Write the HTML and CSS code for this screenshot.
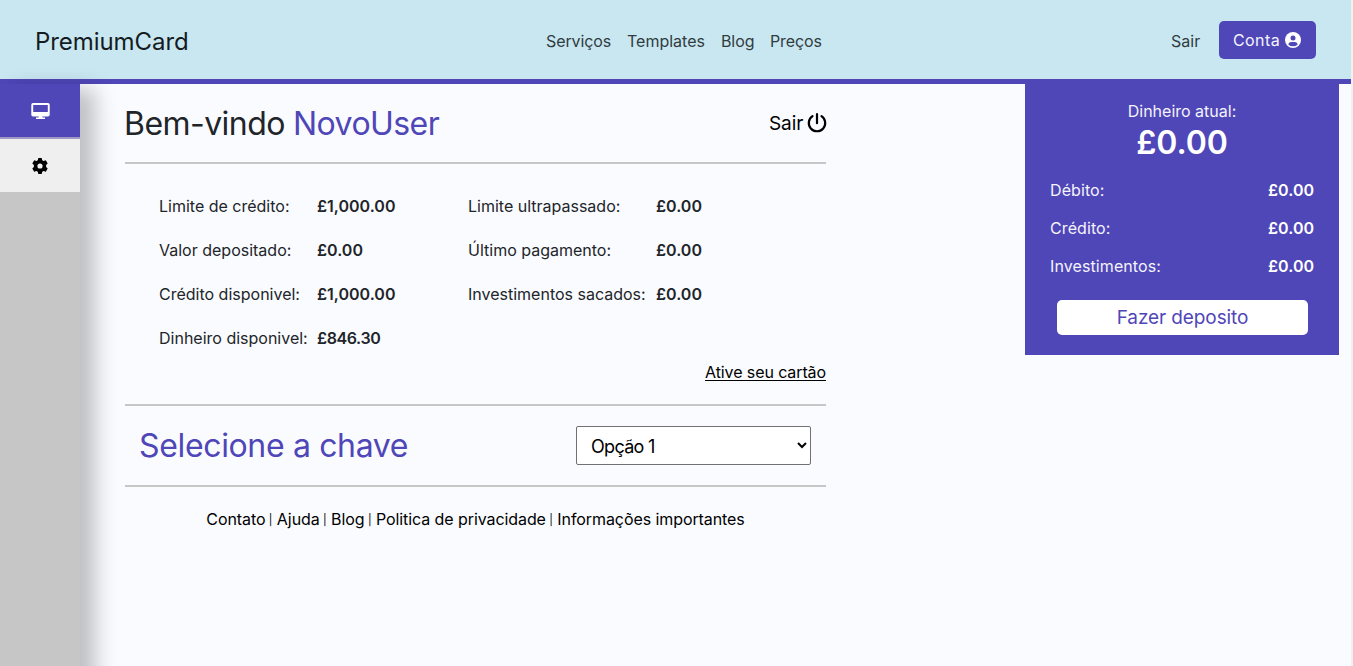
FILE: index.html
```html
<!DOCTYPE html>
<html lang="pt">
<head>
<meta charset="utf-8">
<title>PremiumCard</title>
<link rel="stylesheet" href="styles.css">
</head>
<body>
<div class="page">
  <header class="header">
    <a class="brand">PremiumCard</a>
    <nav class="nav"><a class="n1">Serviços</a><a class="n2">Templates</a><a class="n3">Blog</a><a class="n4">Preços</a></nav>
    <div class="account">
      <a class="logout">Sair</a>
      <a class="account-btn"><span class="t-conta">Conta</span>
        <svg width="16" height="16" viewBox="0 0 16 16"><circle cx="8" cy="8" r="8" fill="#fff"/><circle cx="8" cy="6.1" r="2.5" fill="#4f46b8"/><path d="M3.3 12.4C3.8 10.9 5 10.1 6.3 10.1h3.4c1.3 0 2.5.8 3 2.3A6.4 6.4 0 0 1 8 14.300a6.400 6.400 0 0 1-4.700-1.900z" fill="#4f46b8"/></svg>
      </a>
    </div>
  </header>
  <div class="body">
    <aside class="sidebar">
      <a class="side-item active"><svg width="19" height="17" viewBox="0 0 19 17" fill="#fff"><path fill-rule="evenodd" d="M2 0h15a1.700 1.700 0 0 1 1.700 1.700v10a1.700 1.700 0 0 1-1.700 1.700H2A1.700 1.700 0 0 1 .3 11.700v-10A1.700 1.700 0 0 1 2 0zm.2 2v7h14.600V2z"/><path d="M7.800 13h3.400l.4 1.400h2.400v1.600H5v-1.600h2.400z"/></svg></a>
      <a class="side-item"><svg width="16" height="16" viewBox="0 0 16 16"><path fill-rule="evenodd" d="M6.300 0h3.400l.5 2.200 1.400.8 2.200-.7 1.900 3.200-1.600 1.500v2l1.600 1.500-1.900 3.200-2.200-.7-1.400.8L9.700 16H6.300l-.5-2.200-1.400-.8-2.200.7-1.900-3.200L1.900 9V7L.3 5.500l1.900-3.200 2.200.7 1.400-.8zM8 5.400a2.600 2.600 0 1 0 0 5.200 2.600 2.600 0 0 0 0-5.200z"/></svg></a>
    </aside>
    <main class="main">
      <section class="welcome">
        <h1 class="title"><span class="t-bem">Bem-vindo</span><span class="t-user">NovoUser</span></h1>
        <a class="power"><span class="t-sair">Sair</span>
          <svg width="20" height="20" viewBox="0 0 20 20" fill="none" stroke="#000" stroke-width="2.200" stroke-linecap="round"><path d="M10 1.200v9M5.500 3.200a8.200 8.200 0 1 0 9 0"/></svg></a>
      </section>
      <section class="summary">
        <dl class="limits">
          <dt>Limite de crédito:</dt><dd>£1,000.00</dd><dt>Limite ultrapassado:</dt><dd>£0.00</dd>
          <dt>Valor depositado:</dt><dd>£0.00</dd><dt>Último pagamento:</dt><dd>£0.00</dd>
          <dt>Crédito disponivel:</dt><dd>£1,000.00</dd><dt>Investimentos sacados:</dt><dd>£0.00</dd>
          <dt>Dinheiro disponivel:</dt><dd class="available">£846.30</dd>
        </dl>
        <a class="activate">Ative seu cartão</a>
      </section>
      <section class="keys">
        <h2 class="key-title">Selecione a chave</h2>
        <select class="key-select"><option>Opção 1</option></select>
      </section>
      <footer class="footer">Contato <i>|</i> Ajuda <i>|</i> Blog <i>|</i> Politica de privacidade <i>|</i> Informações importantes</footer>
    </main>
    <section class="wallet">
      <p class="w-label">Dinheiro atual:</p>
      <p class="w-total">£0.00</p>
      <div class="w-row"><span>Débito:</span><b>£0.00</b></div>
      <div class="w-row"><span>Crédito:</span><b>£0.00</b></div>
      <div class="w-row"><span>Investimentos:</span><b>£0.00</b></div>
      <a class="deposit">Fazer deposito</a>
    </section>
  </div>
</div>
</body>
</html>
```
FILE: styles.css
```css
* { box-sizing: border-box; }
body { margin: 0; background: #f0f0f0; overflow: hidden; font: 16px/24px Inter, "Liberation Sans", sans-serif; color: #212529; letter-spacing: 0; }
h1, h2, p, dl, dd { margin: 0; font-weight: 400; }
a, span, dt, dd, b, h2 { white-space: nowrap; }
svg { display: block; flex: none; }
.page { width: 1351px; height: 666px; display: flex; flex-direction: column; background: #fafbff; overflow: hidden; }
.header { height: 84px; flex: none; background: #c9e7f1; border-bottom: 5px solid #4f46b8; display: grid; grid-template-columns: 546px 1fr 180px; align-items: center; padding-top: 3px; }
.brand { padding: 2px 0 0 35px; font-size: 24px; letter-spacing: -0.06px; color: #151c1f; }
.nav { display: flex; color: #303c40; letter-spacing: -0.1px; }
.n1 { width: 81px; } .n2 { width: 94px; letter-spacing: 0; } .n3 { width: 49px; }
.account { display: flex; align-items: center; color: #303c40; }
.logout { width: 48px; }
.account-btn { width: 97px; height: 38px; margin-top: -3px; padding: 0 15px 0 14px; border-radius: 5px; background: #4f46b8; color: #f4f4fb; display: flex; align-items: center; justify-content: space-between; }
.t-conta { letter-spacing: 0.4px; }
.body { flex: 1; display: flex; min-height: 0; }
.sidebar { width: 80px; height: 666px; background: #c6c6c6; box-shadow: 15px 5px 20px rgba(0,0,0,.24); }
.side-item { height: 53px; background: #efefef; display: flex; align-items: center; justify-content: center; }
.side-item.active { height: 55px; padding-top: 2px; background: #4f46b8; border-bottom: 2px solid #a099c6; }
.main { width: 701px; margin-left: 45px; }
.welcome { height: 80px; padding-top: 1px; border-bottom: 2px solid #c6c6c6; display: flex; justify-content: space-between; align-items: center; }
.title { display: flex; margin-left: -1px; padding-top: 1px; font-size: 32px; line-height: 40px; letter-spacing: -0.55px; }
.t-bem { width: 169px; }
.t-user { color: #4f46b8; }
.power { display: flex; align-items: center; justify-content: space-between; width: 58px; margin-right: -1px; font-size: 19px; letter-spacing: -0.1px; color: #000; }
.power svg { margin-top: -2px; }
.summary { height: 242px; border-bottom: 2px solid #c6c6c6; padding: 20px 0 0 34px; }
.limits { display: grid; grid-template-columns: 158px 151px 188px 1fr; grid-auto-rows: 44px; align-items: center; }
.limits dd { font-weight: 600; }
.limits .available { letter-spacing: -0.4px; }
.activate { display: block; width: fit-content; margin-left: auto; color: #000; letter-spacing: -0.1px; text-decoration: underline; text-underline-offset: 2px; }
.keys { height: 81px; border-bottom: 2px solid #c6c6c6; padding: 0 15px 0 14px; display: flex; align-items: center; justify-content: space-between; }
.key-title { font-size: 32px; line-height: 40px; letter-spacing: -0.35px; color: #4f46b8; }
.key-select { width: 235px; height: 39px; padding: 2px 10px 0; font: 18px Inter, sans-serif; letter-spacing: -0.7px; background: #fff; color: #000; border: 1px solid #707075; border-radius: 2px; }
.footer { margin-top: 20px; text-align: center; letter-spacing: -0.08px; color: #000; white-space: nowrap; }
.footer i { display: inline-block; width: 2.6px; font-style: normal; font-size: 11px; line-height: 12px; text-indent: -1px; vertical-align: 1px; }
.wallet { width: 314px; height: 271px; margin-left: 199px; padding: 15px 25px 0; background: #4f46b8; color: #f4f4fb; }
.w-label { text-align: center; }
.w-total { height: 48px; text-align: center; font-size: 32px; line-height: 40px; font-weight: 600; letter-spacing: -0.05px; color: #fff; }
.w-row { height: 38px; display: flex; justify-content: space-between; align-items: center; }
.w-row span { letter-spacing: 0.1px; }
.w-row b { font-weight: 600; color: #fff; }
.deposit { display: block; height: 35px; margin: 15px 6px 0 7px; border-radius: 5px; background: #fff; color: #4f46b8; font-size: 19px; line-height: 35px; letter-spacing: -0.1px; text-align: center; }
```
